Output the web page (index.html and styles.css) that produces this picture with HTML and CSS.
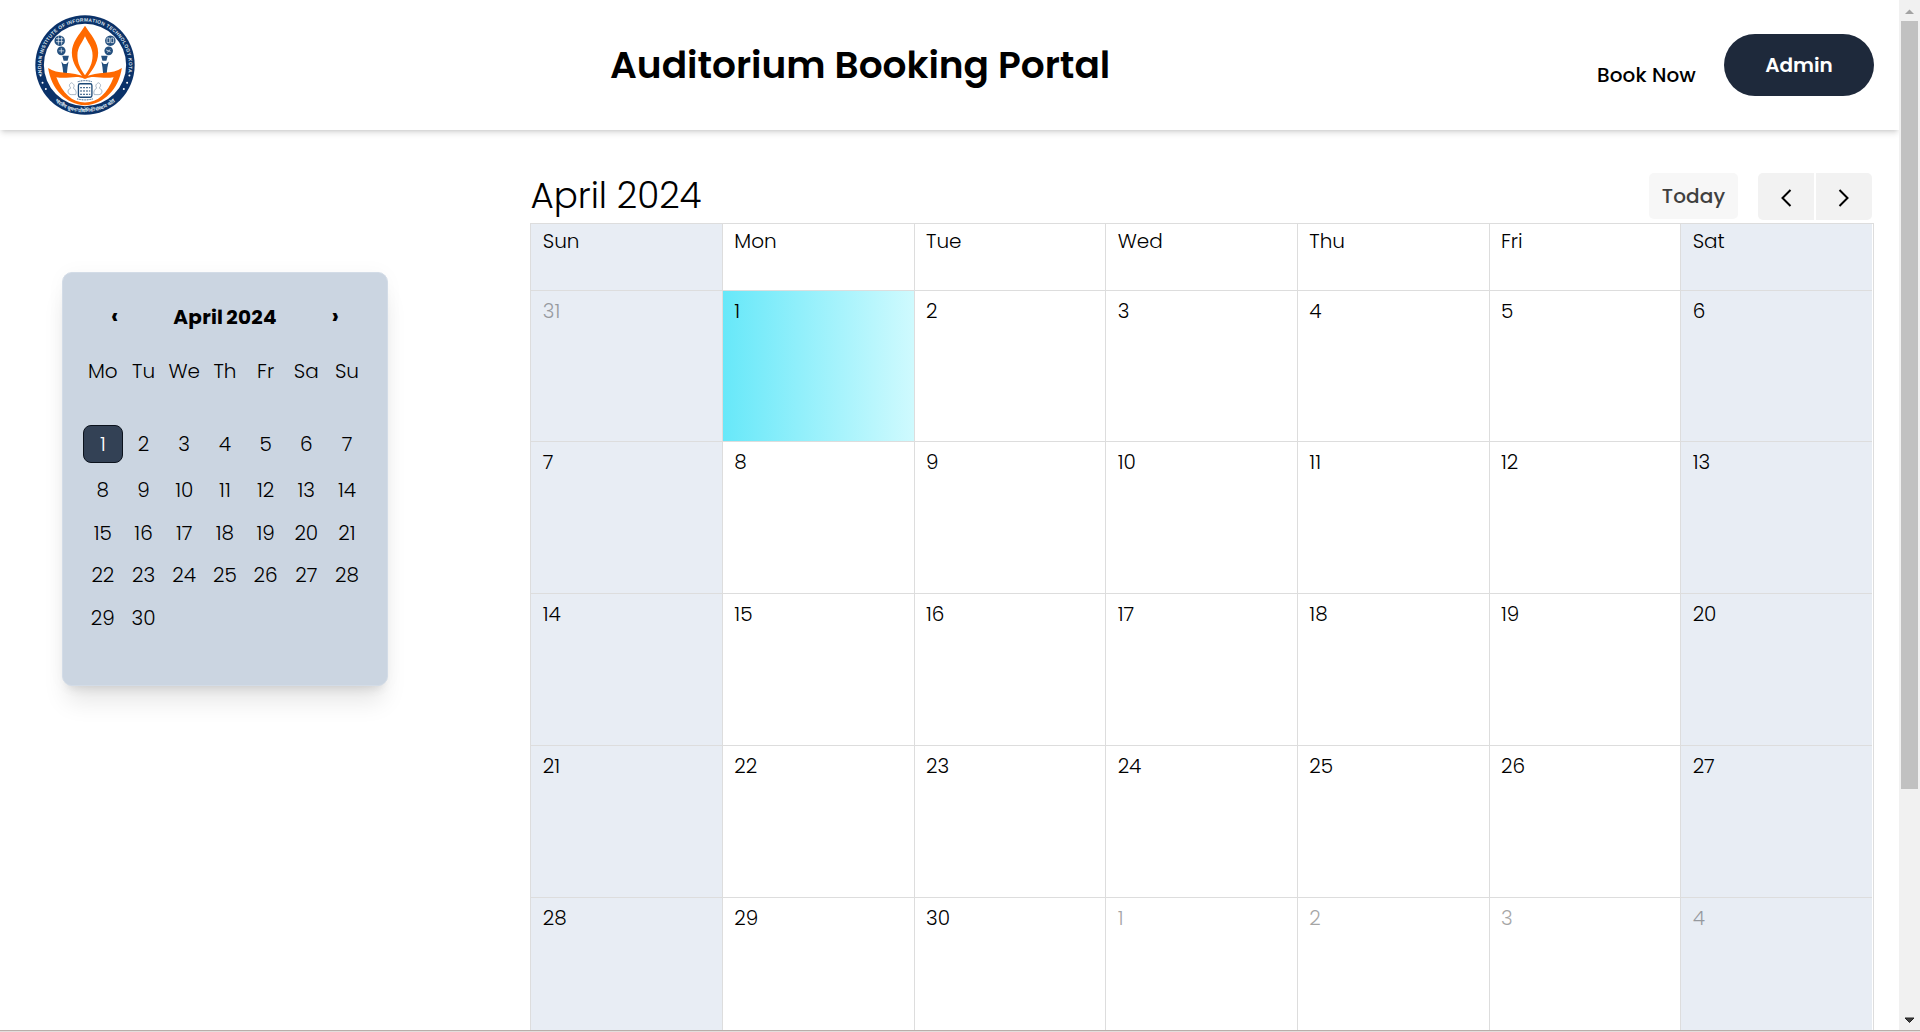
FILE: index.html
```html
<!DOCTYPE html>
<html lang="en">
<head>
<meta charset="utf-8">
<title>Auditorium Booking Portal</title>
<link rel="stylesheet" href="styles.css">
</head>
<body>
<div class="window">
<div class="page">
<header class="topbar">
<svg class="logo" viewBox="40 40 310 310" aria-label="Indian Institute of Information Technology Kota">
<defs><path id="top" d="M65 224A133 133 0 1 1 325 224"/><path id="bottom" d="M78 278A143 143 0 0 0 312 278"/></defs>
<circle cx="195" cy="195" r="151" fill="#0b3269"/><circle cx="195" cy="195" r="125" fill="#fff"/>
<text class="seal" textLength="468"><textPath href="#top" textLength="468">INDIAN INSTITUTE OF INFORMATION TECHNOLOGY KOTA</textPath></text>
<text class="seal hindi"><textPath href="#bottom" startOffset="50%" text-anchor="middle">भारतीय सूचना प्रौद्योगिकी संस्थान कोटा</textPath></text>
<g fill="#fff"><circle cx="60" cy="227" r="3"/><circle cx="66" cy="249" r="3"/><circle cx="76" cy="268" r="3"/><circle cx="330" cy="227" r="3"/><circle cx="323" cy="249" r="3"/><circle cx="313" cy="268" r="3"/></g>
<g fill="#24507f"><circle cx="118" cy="121" r="16"/><circle cx="123" cy="152" r="13"/><circle cx="272" cy="121" r="16"/><circle cx="267" cy="152" r="13"/><path d="M126 167h20l-4 15h-12zM244 167h20l-4 15h-12zM123 184l7 8h8l7-8-3 18-3 28h-9l-3-27zM245 184l7 8h8l7-8-4 19-3 27h-9l-3-28z"/></g>
<g fill="none" stroke="#fff" stroke-width="2"><path d="M107 115h22M107 124h22M114 108v25M124 109v24M115 152h16M123 144v15M262 113h8v14h-8zM274 113h8v14h-8zM259 149l14 6M262 157l10-9"/></g>
<path fill="#ff6900" fill-rule="evenodd" d="M195 76C178 103 155 125 155 158C155 192 177 215 191 236L199 236C213 215 235 192 235 158C235 125 212 103 195 76ZM195 108C203 128 218 140 218 166C218 190 208 208 195 226C182 208 172 190 172 166C172 140 187 128 195 108Z"/>
<path fill="#ff6900" fill-rule="evenodd" d="M83 204C110 224 157 214 195 231C233 214 280 224 307 204C298 267 253 315 195 317C137 315 92 267 83 204ZM108 232C127 281 155 308 195 309C235 308 263 281 282 232C249 239 222 224 195 237C168 224 141 239 108 232Z"/>
<g fill="none" stroke="#1c4977" stroke-width="4"><rect x="175" y="252" width="41" height="41" rx="5"/><path d="M180 264h31M180 274h31M180 284h31" stroke-dasharray="6 3" stroke-width="3"/><path d="M173 246q22-7 44 0M171 298q24 6 48 0" stroke-width="3" stroke-dasharray="3 2"/></g>
<g fill="none" stroke="#7d92aa" stroke-width="2"><path d="M154 249c-8 4-8 10-2 16-14 6-9 20 1 20h14c3-8 0-16-8-20 5-5 4-12-5-16M236 249c8 4 8 10 2 16 14 6 9 20-1 20h-14c-3-8 0-16 8-20-5-5-4-12 5-16"/></g>
</svg>
<h1 class="title">Auditorium Booking Portal</h1>
<nav class="actions"><a class="book">Book Now</a><a class="admin">Admin</a></nav>
</header>
<main class="content">
<aside class="mini">
<div class="mini-head"><b class="chev">‹</b><b class="mini-title">April 2024</b><b class="chev">›</b></div>
<div class="week">
<span>Mo</span><span>Tu</span><span>We</span><span>Th</span><span>Fr</span><span>Sa</span><span>Su</span></div>
<div class="days">
<span class="picked">1</span><span>2</span><span>3</span><span>4</span><span>5</span><span>6</span><span>7</span>
<span>8</span><span>9</span><span>10</span><span>11</span><span>12</span><span>13</span><span>14</span>
<span>15</span><span>16</span><span>17</span><span>18</span><span>19</span><span>20</span><span>21</span>
<span>22</span><span>23</span><span>24</span><span>25</span><span>26</span><span>27</span><span>28</span>
<span>29</span><span>30</span></div>
</aside>
<section class="calendar">
<div class="toolbar"><h2 class="month">April 2024</h2>
<span class="today">Today</span>
<span class="arrow prev"><svg width="12" height="18" viewBox="0 0 12 18"><path d="M10.500 1 2.500 9l8 8"/></svg></span>
<span class="arrow next"><svg width="12" height="18" viewBox="0 0 12 18"><path d="M1.500 1 9.500 9l-8 8"/></svg></span></div>
<div class="grid">
<div class="cell name end">Sun</div><div class="cell name">Mon</div><div class="cell name">Tue</div><div class="cell name">Wed</div><div class="cell name">Thu</div><div class="cell name">Fri</div><div class="cell name end">Sat</div>
<div class="cell end"><span class="other">31</span></div><div class="cell now">1</div><div class="cell">2</div><div class="cell">3</div><div class="cell">4</div><div class="cell">5</div><div class="cell end">6</div>
<div class="cell end">7</div><div class="cell">8</div><div class="cell">9</div><div class="cell">10</div><div class="cell">11</div><div class="cell">12</div><div class="cell end">13</div>
<div class="cell end">14</div><div class="cell">15</div><div class="cell">16</div><div class="cell">17</div><div class="cell">18</div><div class="cell">19</div><div class="cell end">20</div>
<div class="cell end">21</div><div class="cell">22</div><div class="cell">23</div><div class="cell">24</div><div class="cell">25</div><div class="cell">26</div><div class="cell end">27</div>
<div class="cell end">28</div><div class="cell">29</div><div class="cell">30</div><div class="cell"><span class="other">1</span></div><div class="cell"><span class="other">2</span></div><div class="cell"><span class="other">3</span></div><div class="cell end"><span class="other">4</span></div>
</div>
</section>
</main>
</div>
<div class="scrollbar"><svg width="21" height="21"><path d="M6 14 10.500 9.500 15 14z" fill="#a3a3a3"/></svg><div class="thumb"></div><svg class="down" width="21" height="21"><path d="M6 9h9l-4.500 4.500z" fill="#404040" stroke="#222"/></svg></div>
</div>
<div class="edge"></div>
</body>
</html>
```
FILE: styles.css
```css
* { box-sizing: border-box; }
body { margin: 0; height: 1032px; overflow: hidden; background: #fff; color: #000; font: 300 20px/24px Poppins, Inter, "Open Sans", sans-serif; }
h1, h2 { margin: 0; }
.window { display: flex; height: 1030px; overflow: hidden; }
.page { width: 1899px; overflow: hidden; }
.edge { height: 2px; background: #e3dddc; border-top: 1px solid #b9aeaa; }

.topbar { display: flex; align-items: center; height: 130px; padding: 0 25px 0 34px; box-shadow: 0 4px 6px -1px rgba(0,0,0,.13), 0 2px 4px -2px rgba(0,0,0,.13); }
.logo { width: 102px; height: 102px; }
.seal { font: 700 15px "Liberation Sans", sans-serif; fill: #dbe5ef; }
.hindi { font-size: 15px; }
.title { margin-left: 474px; width: 510px; white-space: nowrap; font-size: 37.5px; line-height: 48px; font-weight: 600; }
.actions { display: flex; margin-left: auto; align-items: center; gap: 27px; }
.book { width: 100px; margin-top: 20px; white-space: nowrap; font-weight: 500; letter-spacing: .1px; }
.admin { width: 150px; height: 62px; border-radius: 31px; background: #1e293b; color: #fff; text-align: center; line-height: 62px; font-weight: 600; }

.content { display: flex; padding-top: 43px; }
.mini { width: 326px; height: 414px; margin: 99px 0 0 62px; padding: 26px 20px 0; border: 1px solid #d3dce7; border-radius: 10px; background: #cbd5e1; box-shadow: 0 20px 25px -5px rgba(0,0,0,.1), 0 8px 10px -6px rgba(0,0,0,.1), 0 0 20px rgba(0,0,0,.03); }
.mini-head { display: flex; justify-content: space-between; height: 36px; line-height: 36px; padding: 0 28px; }
.mini-title { font-weight: 700; white-space: nowrap; letter-spacing: .25px; word-spacing: -1.5px; }
.chev { font-size: 22px; font-weight: 700; }
.week, .days { display: grid; grid-template-columns: repeat(7, 40.7px); margin-left: -.5px; text-align: center; }
.week { margin-top: 15px; line-height: 42px; }
.days { margin-top: 29px; grid-template-rows: 45px 47px 40px 43px 43px; align-items: center; }
.picked { height: 38px; line-height: 36px; border: 1px solid #0b121c; border-radius: 8px; background: #334155; color: #fff; }

.calendar { width: 1343.6px; margin-left: 142.4px; }
.toolbar { display: flex; height: 50px; }
.month { margin-right: auto; font-size: 35.7px; line-height: 46px; font-weight: 300; }
.today { width: 89px; height: 46px; margin-right: 20px; border-radius: 5px; background: #f7f7f7; color: #404040; text-align: center; line-height: 47px; font-weight: 500; letter-spacing: .1px; }
.arrow { display: flex; align-items: center; justify-content: center; width: 56px; height: 47px; background: #f2f2f2; }
.arrow path { fill: none; stroke: #000; stroke-width: 2; }
.prev { margin-right: 2px; border-radius: 5px 0 0 5px; }
.next { margin-right: 2px; border-radius: 0 5px 5px 0; }
.arrow svg { margin-top: 2px; }
.grid { display: grid; grid-template-columns: repeat(7, 1fr); grid-template-rows: 67px 151px 152px 152px 152px 152px; padding-right: 1px; border-right: 1px solid #ddd; border-top: 1px solid #ddd; }
.cell { padding: 8px 11.3px; border-left: 1px solid #ddd; border-bottom: 1px solid #ddd; }
.name { padding-top: 5px; }
.end { background: #e8edf4; }
.now { background: linear-gradient(to right, #67e8f9, #cffafe); }
.other { opacity: .35; }

.scrollbar { display: flex; flex-direction: column; align-items: center; width: 21px; background: #f1f1f1; }
.thumb { width: 17px; height: 768px; background: #c1c1c1; }
.down { margin-top: auto; }
```
